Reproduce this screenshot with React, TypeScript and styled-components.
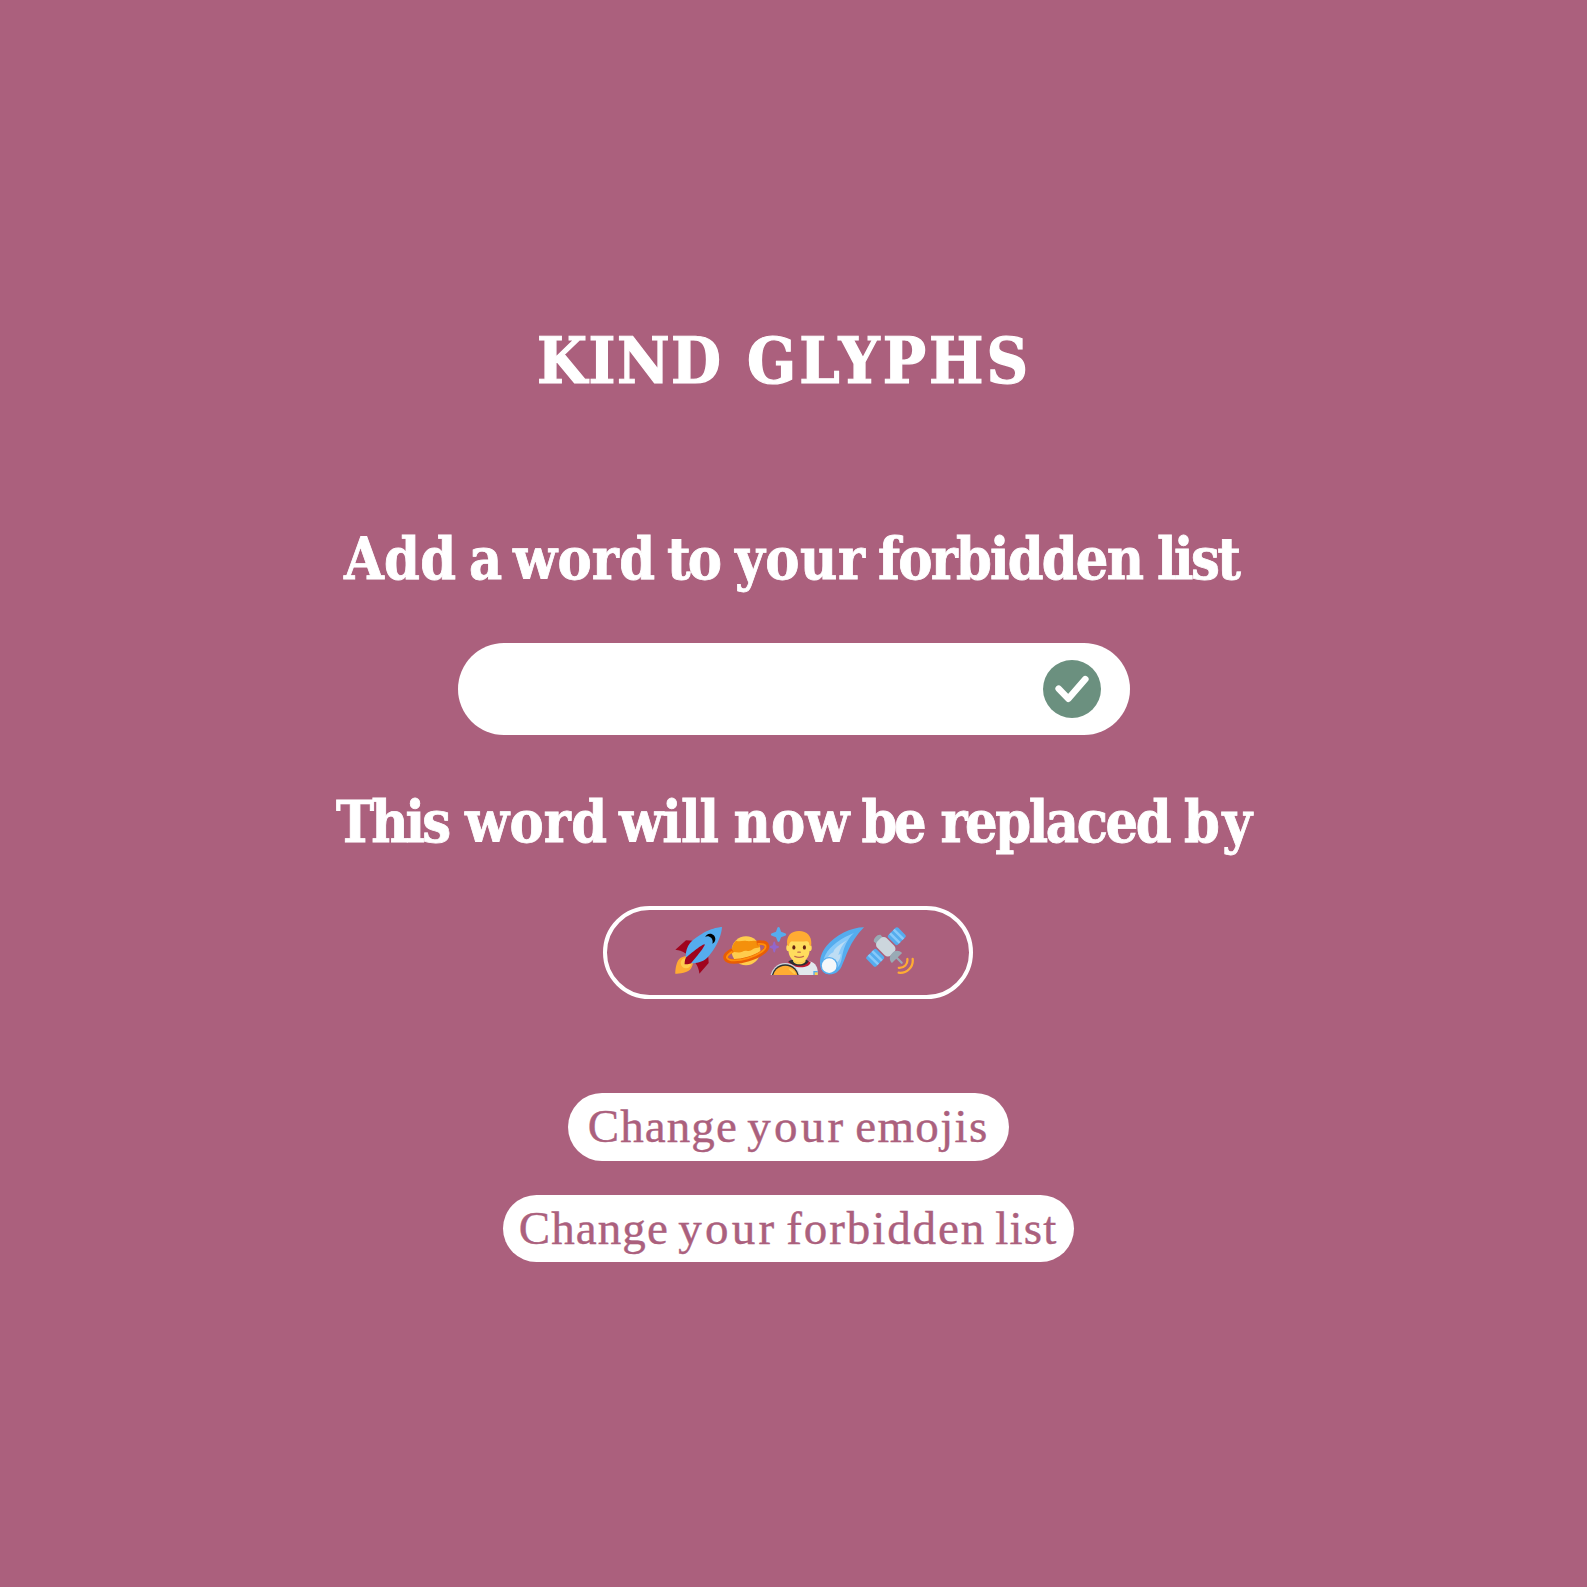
import React, { useLayoutEffect, useRef, useState } from "react";
import styled, { createGlobalStyle } from "styled-components";

const rose = "#ab607d";

const GlobalStyle = createGlobalStyle`
  * { box-sizing: border-box; }
  body { margin: 0; background: ${rose}; }
  h1, h2 { margin: 0; }
`;

const Page = styled.main`
  min-height: 1587px;
  padding-top: 321px;
  display: flex;
  flex-direction: column;
  align-items: center;
  background: ${rose};
`;

const Title = styled.h1`
  display: flex;
  height: 80px;
  margin: 0 22px 121px 0;
  color: #fff;
  font: 700 64px/79px "DejaVu Serif Condensed", "DejaVu Serif", serif;
  font-stretch: condensed;
  -webkit-text-stroke: 1.2px #fff;
`;

const Heading = styled.h2<{ $shift: number }>`
  display: flex;
  height: 72px;
  margin-right: ${(p) => p.$shift}px;
  color: #fff;
  font: 700 57px/73px "DejaVu Serif Condensed", "DejaVu Serif", serif;
  font-stretch: condensed;
  -webkit-text-stroke: 0.8px #fff;
`;

const WordBox = styled.span<{ $lead: number; $width: number }>`
  display: block;
  flex: none;
  width: ${(p) => p.$width}px;
  margin-left: ${(p) => p.$lead}px;
  white-space: nowrap;
`;

const Field = styled.div`
  display: flex;
  align-items: center;
  justify-content: flex-end;
  width: 672px;
  height: 92.5px;
  margin: 48.5px 0 49.5px 0;
  padding: 1px 29px 0 0;
  border-radius: 46px;
  background: #fff;
`;

const Confirm = styled.button`
  width: 58px;
  height: 58px;
  padding: 0;
  border: 0;
  border-radius: 50%;
  background: #6b907f;
  svg { display: block; }
`;

const EmojiFrame = styled.div`
  display: flex;
  align-items: center;
  width: 370px;
  height: 93px;
  margin: 49.5px 11px 94px 0;
  padding: 0 0 4px 67px;
  border: 4px solid #fff;
  border-radius: 47px;
  svg { display: block; flex: none; }
`;

const Actions = styled.div`
  display: flex;
  flex-direction: column;
  align-items: center;
  gap: 34px;
  margin-right: 11px;
`;

const Pill = styled.button<{ $width: number }>`
  display: flex;
  justify-content: center;
  width: ${(p) => p.$width}px;
  height: 67.5px;
  padding: 0 1px 0 0;
  border: 0;
  border-radius: 34px;
  background: #fff;
  color: ${rose};
  font: 400 47px/67.5px "Liberation Serif", serif;
  -webkit-text-stroke: 0.4px ${rose};
  text-align: left;
`;

type WordSpec = [text: string, width: number, lead?: number];

/* Spreads the letters of a word evenly over its column width. */
function Word({ text, width, lead }: { text: string; width: number; lead: number }) {
  const ref = useRef<HTMLSpanElement>(null);
  const [tracking, setTracking] = useState(0);
  useLayoutEffect(() => {
    if (ref.current && text.length > 1) {
      const natural = ref.current.getBoundingClientRect().width;
      setTracking((width - natural) / (text.length - 1));
    }
  }, [text, width]);
  return (
    <WordBox $lead={lead} $width={width}>
      <span ref={ref} style={{ letterSpacing: tracking }}>{text}</span>
    </WordBox>
  );
}

const Words = ({ items }: { items: WordSpec[] }) => (
  <>
    {items.map(([text, width, lead = 0]) => (
      <Word key={text} text={text} width={width} lead={lead} />
    ))}
  </>
);

const emoji = { width: 48, height: 48, viewBox: "0 0 36 36" };

const Rocket = () => (
  <svg {...emoji}>
    <path fill="#A0041E" d="M1 17l8-7 16 1 1 16-7 8s.001-5.999-6-12-12-6-12-6z" />
    <path fill="#FFAC33" d="M.973 35s-.036-7.979 2.985-11S15 21.187 15 21.187 14.999 29 11.999 32c-3 3-11.026 3-11.026 3z" />
    <circle fill="#FFCC4D" cx="9" cy="27" r="4" />
    <path fill="#55ACEE" d="M35.999 0s-10 0-22 10c-6 5-6 14-4 16s11 2 16-4c10-12 10-22 10-22z" />
    <path d="M26.999 5c-1.623 0-3.013.971-3.641 2.36.502-.227 1.055-.36 1.641-.36 2.209 0 4 1.791 4 4 0 .586-.133 1.139-.359 1.64 1.389-.627 2.359-2.017 2.359-3.64 0-2.209-1.791-4-4-4z" />
    <path fill="#A0041E" d="M8 28s0-4 1-5 13.001-10.999 14-10-9.001 13-10.001 14S8 28 8 28z" />
  </svg>
);

const Planet = () => (
  <svg {...emoji}>
    <circle cx="18" cy="17.800" r="10.800" fill="#FFCC4D" />
    <path fill="#F4900C" d="M7.500 15.500c.5-2 1.500-3.800 3-5.200 3 1 5-.3 8 .2 3.500.5 5.500-.8 8 .2 1 1.300 1.700 2.800 2 4.300-2 1-4 .3-6 2-3 2-5 0-7.300 1.500-3 1.500-5.500-.5-7.700.5z" />
    <path fill="none" stroke="#FFAC33" strokeWidth="1.200" d="M11 25c5 .5 11-2 17-5" />
    <g transform="rotate(-17 18 18)" fill="none">
      <path stroke="#E85D04" strokeWidth="3.600" d="M8.500 14.500C3.500 15.500 1.800 17 2 18.800 2.300 22 9 24.300 18 24.300s15.700-2.300 16-5.500c.2-1.800-1.500-3.300-6.500-4.300" />
      <path stroke="#FF8F0A" strokeWidth="1.400" d="M8.200 15.500C4.300 16.500 2.700 17.500 2.900 18.800 3.200 21.500 10 23.600 18 23.600s14.800-2.100 15.100-4.800c.2-1.300-1.400-2.300-5.300-3.300" />
    </g>
  </svg>
);

const Astronaut = () => (
  <svg {...emoji}>
    <path fill="#55ACEE" d="M6.400 0c.5 0 .7.300.9.800l1 2.800 3 1.100c.5.200.8.400.8.900s-.3.700-.8.900l-3 1.100-1 2.800c-.2.500-.4.800-.9.800s-.7-.3-.9-.8l-1-2.800-3-1.100C1 6.300.7 6.100.7 5.600s.3-.7.800-.9l3-1.100 1-2.800c.2-.5.400-.8.900-.8z" />
    <path fill="#9266CC" d="M3.200 10.800c.4 0 .5.300.6.600l.6 2.200 1.700.7c.4.200.6.300.6.700s-.2.500-.6.700l-1.700.7-.6 2.200c-.1.300-.2.600-.6.600s-.5-.3-.6-.6L2 16.400l-1.700-.7C0 15.500 0 15.300 0 15V14.400L2 13.600l.6-2.200c.1-.3.200-.6.600-.6z" />
    <path fill="#E1E8ED" d="M17 36V27l11-1.300c5 0 7.800 3.300 7.800 8.300v2z" />
    <path fill="#BE1931" d="M13.500 26.300l3-1.300h11l3 1.500c-.4 4.500-13 5.500-17-.2z" />
    <path fill="#292F33" d="M13.800 25.700l2-1h11.700l1.500 1c-2 4.600-12 4.600-15.200 0z" />
    <path fill="#FFDC5D" d="M17.500 22h9v4c-2 2.700-7 2.700-9 0z" />
    <path fill="#F9CA55" d="M17.500 24.500c3 2.500 6 2.500 9 0v1.200c-3 2.200-6 2.200-9 0z" />
    <ellipse cx="13.700" cy="15.700" rx="1.500" ry="2.300" fill="#FFDC5D" />
    <ellipse cx="29.800" cy="15.700" rx="1.500" ry="2.300" fill="#FFDC5D" />
    <path fill="#FFDC5D" d="M13.700 9.500h16.100v7c0 6-3.500 10-8 10s-8.100-4-8.100-10z" />
    <path fill="#FFAC33" d="M21.800 3c6 0 9.500 4 9.200 9.500-.1 1.500-.5 2-1.100 1.700-.3-2-1-3.200-2-3.500-3 .3-9 .3-11.500-.1-1.500.6-2 1.800-2.300 3.600-.8.200-1.200-.4-1.300-1.600C12.400 7 15.500 3 21.800 3z" />
    <ellipse cx="17.900" cy="15.300" rx="1.150" ry="1.650" fill="#662113" />
    <ellipse cx="25.800" cy="15.300" rx="1.150" ry="1.650" fill="#662113" />
    <path fill="none" stroke="#C1694F" strokeWidth="1" strokeLinecap="round" d="M20.900 18.900h1.800M18.600 22c2 .9 4.500.9 6.500 0" />
    <path fill="#55ACEE" d="M32.500 33h3.300v3h-3.300z" />
    <path fill="#FFCC4D" d="M33.500 34h2.300v2h-2.300z" />
    <circle cx="11.500" cy="38.300" r="11.300" fill="#CCD6DD" />
    <circle cx="11.500" cy="38.300" r="10.300" fill="#292F33" />
    <circle cx="11.500" cy="38.300" r="9.300" fill="#FFAC33" />
    <path fill="#FFCC4D" d="M14 31c2.500.5 4.500 2 5.300 4-.7.500-1.800.3-2.800-1-1-1.200-2.500-1.300-2.500-3z" />
  </svg>
);

const Comet = () => (
  <svg {...emoji}>
    <path fill="#55ACEE" d="M34.700.1C25 0 13 6 6.500 14 2.500 19 1 24 1.700 28.500 2 33 5 35.500 9 35.500c4 0 6.500-2 8.500-5.500C21.500 22 23 12 34.700 0z" />
    <path fill="#88C9F9" d="M27 4.500C18 8 9 14 5.500 21c-1.500 3-2 5.500-1.500 8l10 2c4-3 3.500-8 5-13 1.500-5 4-10 8-13.500z" />
    <path fill="#BDDDF4" d="M21.500 10C16 13.500 12 16 11.500 19c-2.500 1-4.500 3.500-5 6l7.500 2c2-2 3-4 3-7l-1.800 1C16.500 17 18 13.500 21.500 10z" />
    <circle cx="8.400" cy="29" r="6.500" fill="#55ACEE" />
    <circle cx="8.400" cy="29" r="5.500" fill="#F5F8FA" />
  </svg>
);

const Satellite = () => (
  <svg {...emoji}>
    <g transform="rotate(45 15 15)">
      <rect x="9.900" y="-1.700" width="10.200" height="10.500" rx="1.500" fill="#55ACEE" />
      <path fill="#88C9F9" d="M9.900.7h10.200v1.900H9.900zM9.900 4.600h10.200v1.900H9.900z" />
      <rect x="9.900" y="21.200" width="10.200" height="10.500" rx="1.500" fill="#55ACEE" />
      <path fill="#88C9F9" d="M9.900 23.500h10.200v1.900H9.900zM9.900 27.400h10.200v1.900H9.900z" />
      <path fill="#99AAB5" d="M9 13.200l-3.500-1.700C3.700 13 3.700 17 5.500 18.500L9 16.800z" />
      <path fill="#99AAB5" d="M5.500 11.500h4.300v7H5.500z" />
      <rect x="7.500" y="10" width="14.500" height="10" rx="3.300" fill="#CCD6DD" />
      <path fill="#99AAB5" d="M21.500 15c0-3.200 2-5.200 5.200-5.400v4.600h5a.8.800 0 0 1 0 1.600h-5v4.600c-3.200-.2-5.200-2.200-5.200-5.400z" />
    </g>
    <path fill="none" stroke="#FFAC33" strokeWidth="1.700" strokeLinecap="round" d="M31 24c.5 3.800-2.400 6.900-6.400 6.600M35 24c.7 6-4.400 11-10.500 10.300" />
  </svg>
);

export default function App() {
  return (
    <>
      <GlobalStyle />
      <Page>
        <Title>
          <Words items={[["KIND", 184], ["GLYPHS", 281, 26]]} />
        </Title>
        <Heading $shift={2}>
          <Words
            items={[
              ["Add", 112], ["a", 30, 13], ["word", 142, 14], ["to", 55, 12],
              ["your", 130, 13], ["forbidden", 266, 13], ["list", 84, 13],
            ]}
          />
        </Heading>
        <Field>
          <Confirm aria-label="Confirm">
            <svg width="58" height="58" viewBox="0 0 58 58">
              <path d="M15.700 28.700L25.400 38.700 42.300 19.200" fill="none" stroke="#fff" strokeWidth="6.600" strokeLinecap="round" strokeLinejoin="round" />
            </svg>
          </Confirm>
        </Field>
        <Heading $shift={-1}>
          <Words
            items={[
              ["This", 115], ["word", 142, 14], ["will", 100, 12], ["now", 116, 14.5],
              ["be", 65, 12], ["replaced", 231, 14], ["by", 68, 12.5],
            ]}
          />
        </Heading>
        <EmojiFrame>
          <Rocket />
          <Planet />
          <Astronaut />
          <Comet />
          <Satellite />
        </EmojiFrame>
        <Actions>
          <Pill $width={441}>
            <Words items={[["Change", 149], ["your", 96, 10.5], ["emojis", 132, 12]]} />
          </Pill>
          <Pill $width={571}>
            <Words items={[["Change", 149], ["your", 96, 10.5], ["forbidden", 198, 12], ["list", 61, 11]]} />
          </Pill>
        </Actions>
      </Page>
    </>
  );
}
